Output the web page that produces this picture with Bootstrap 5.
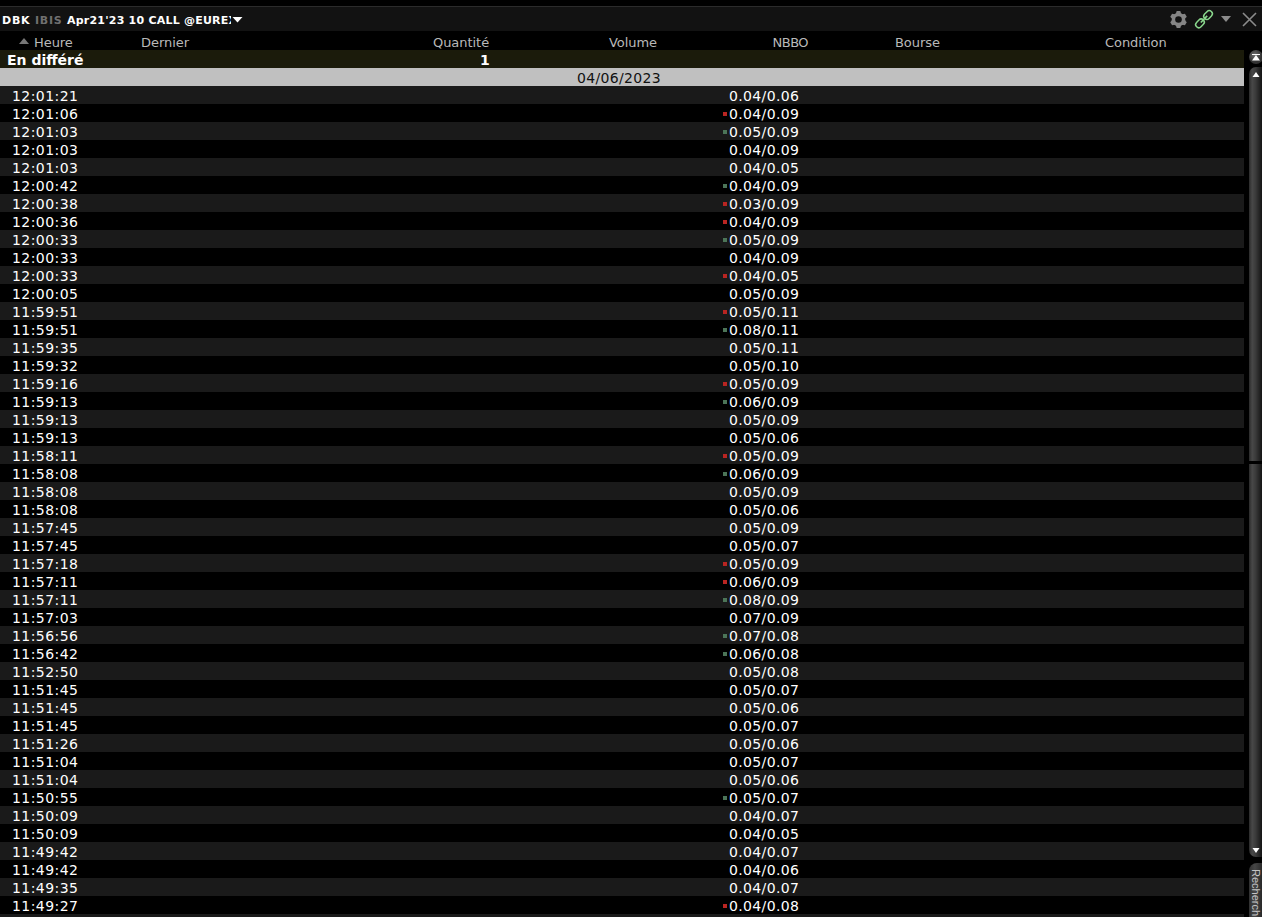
<!DOCTYPE html>
<html lang="fr">
<head>
<meta charset="utf-8">
<title>DBK Apr21'23 10 CALL</title>
<link href="https://cdn.jsdelivr.net/npm/bootstrap@5.3.0/dist/css/bootstrap.min.css" rel="stylesheet">
<style>
body{background:#000;color:#fff;font-family:"DejaVu Sans",sans-serif;height:917px;line-height:18px}
.topline{height:7px;border-bottom:1px solid #2b2b2b}
.titlebar{height:24px;background:#121212;font-size:11px;font-weight:700}
.contract{width:231px;padding-left:2px;padding-top:3px;letter-spacing:.22px}
.symbol{width:33px;letter-spacing:.8px}
.ibis{width:32px;color:#707070;letter-spacing:.7px}
.tape{width:1244px}
.tape-grid{display:grid;grid-template-columns:133px 300px 176px 114px 172px 210px 139px}
.heads{height:19px;color:#b9b9b9;font-size:13px;line-height:24px;letter-spacing:-.05px}
.nbbo-head{padding-left:49.5px;letter-spacing:-.5px}
.delayed{height:18px;background:#1b1b0b;font-size:14px;line-height:20px;font-weight:700}
.delayed-label{padding-left:7px}
.delayed-qty{padding-left:47px}
.day{height:18px;background:#c0c0c0;color:#111;font-size:14px;line-height:20px;padding-right:6px;letter-spacing:.34px}
.tick-row{height:18px;font-size:14px;line-height:20px;letter-spacing:.43px}
.tick-row:nth-child(odd){background:#1a1a1a}
.tick-time{padding-left:12px}
.nbbo{grid-column:5/6;letter-spacing:.36px}
.dot{width:4px;height:4px;margin-right:2px;margin-bottom:1px}
.dot-r{background:#b92522}.dot-g{background:#4c7558}
.rail{width:13px;margin-left:5px;padding-top:19px}
.track{background:linear-gradient(90deg,#2b2b2b,#484848 25%,#3b3b3b 50%,#141414)}
.track-a{height:394px;border-radius:7px 0 0 0;margin-bottom:3px}
.track-b{height:393px;border-radius:0 0 0 7px;margin-bottom:6px}
.search-tab{height:54px;border-radius:8px 0 0 0;color:#c4c4c4;font:11px/13px "Liberation Sans",sans-serif;writing-mode:vertical-rl;padding-top:6px;background:linear-gradient(90deg,#303030,#464646 45%,#292929)}
svg{display:block;flex:none}
</style>
</head>
<body class="overflow-hidden">
<div class="topline"></div>
<header class="titlebar d-flex align-items-center">
  <div class="contract d-flex text-nowrap overflow-hidden"><span class="symbol flex-shrink-0">DBK</span><span class="ibis flex-shrink-0">IBIS</span><span>Apr21'23 10 CALL @EUREX</span></div>
  <svg width="13" height="8" viewBox="0 0 13 8"><path d="M1.5 2h10L6.5 7.5z" fill="#fff"/></svg>
  <div class="ms-auto d-flex">
    <svg width="92" height="24" viewBox="1170 7 92 24" fill="none">
      <g transform="translate(1178.5 19.5)"><g fill="#858585"><circle r="6.7"/><path id="tooth" d="M-2.6-6-1.8-8.5H1.8L2.6-6V6L1.8 8.5H-1.8L-2.6 6z"/><use href="#tooth" transform="rotate(60)"/><use href="#tooth" transform="rotate(120)"/></g><circle r="3.3" fill="#121212"/></g>
      <g transform="translate(1204 19.2) rotate(-46)" stroke="#89d68c" stroke-width="1.5"><rect x="-10.6" y="-3.1" width="9.6" height="6.2" rx="3.1"/><rect x="1" y="-3.1" width="9.6" height="6.2" rx="3.1"/><path d="M-4.6 0H4.6" stroke-width="1.7"/></g>
      <path d="M1221 16h10l-5 6z" fill="#8b8b8b"/>
      <path d="m1243 13 13 13m0-13-13 13" stroke="#8b8b8b" stroke-width="1.6"/>
    </svg>
  </div>
</header>
<main class="d-flex">
  <section class="tape flex-shrink-0">
    <div class="tape-grid heads">
      <div class="d-flex ps-3"><svg width="18" height="19" viewBox="0 0 18 19"><path d="M3 13h10L8 7z" fill="#777"/></svg>Heure</div>
      <div class="ps-2">Dernier</div><div>Quantité</div><div>Volume</div><div class="nbbo-head">NBBO</div><div>Bourse</div><div>Condition</div>
    </div>
    <div class="tape-grid delayed"><div class="delayed-label">En différé</div><div></div><div class="delayed-qty">1</div></div>
    <div class="day text-center">04/06/2023</div>
    <div id="ticks"></div>
  </section>
  <aside class="rail">
    <svg width="13" height="17" viewBox="0 0 13 17"><defs><radialGradient id="ball" cx=".4" cy=".35"><stop stop-color="#707070"/><stop offset="1" stop-color="#333"/></radialGradient></defs><circle cx="7" cy="7" r="7" fill="url(#ball)"/><path d="M3 4.5h8" stroke="#fff"/><path d="M3 10.5h8L7 5z" fill="#fff"/></svg>
    <div class="track track-a"><svg width="13" height="14" viewBox="0 0 13 14"><path d="M3.5 10h7L7 5z" fill="#fff"/></svg></div>
    <div class="track track-b d-flex align-items-end"><svg width="13" height="14" viewBox="0 0 13 14"><path d="M3.5 5h7L7 10z" fill="#fff"/></svg></div>
    <div class="search-tab text-nowrap">Recherch</div>
  </aside>
</main>
<script src="https://cdn.jsdelivr.net/npm/bootstrap@5.3.0/dist/js/bootstrap.bundle.min.js"></script>
<script>
// time, bid/ask in cents, tick direction (r = down, g = up)
const quotes = `12:01:21 04 06
12:01:06 04 09 r
12:01:03 05 09 g
12:01:03 04 09
12:01:03 04 05
12:00:42 04 09 g
12:00:38 03 09 r
12:00:36 04 09 r
12:00:33 05 09 g
12:00:33 04 09
12:00:33 04 05 r
12:00:05 05 09
11:59:51 05 11 r
11:59:51 08 11 g
11:59:35 05 11
11:59:32 05 10
11:59:16 05 09 r
11:59:13 06 09 g
11:59:13 05 09
11:59:13 05 06
11:58:11 05 09 r
11:58:08 06 09 g
11:58:08 05 09
11:58:08 05 06
11:57:45 05 09
11:57:45 05 07
11:57:18 05 09 r
11:57:11 06 09 r
11:57:11 08 09 g
11:57:03 07 09
11:56:56 07 08 g
11:56:42 06 08 g
11:52:50 05 08
11:51:45 05 07
11:51:45 05 06
11:51:45 05 07
11:51:26 05 06
11:51:04 05 07
11:51:04 05 06
11:50:55 05 07 g
11:50:09 04 07
11:50:09 04 05
11:49:42 04 07
11:49:42 04 06
11:49:35 04 07
11:49:27 04 08 r`.split('\n').map(q => q.split(' '));
document.getElementById('ticks').innerHTML = quotes.map(([t, b, a, d]) =>
  `<div class="tape-grid tick-row"><div class="tick-time">${t}</div><div class="nbbo d-flex align-items-center"><span class="dot ${d ? 'dot-' + d : ''}"></span>0.${b}/0.${a}</div></div>`
).join('') + '<div class="tick-row"></div>';
</script>
</body>
</html>
